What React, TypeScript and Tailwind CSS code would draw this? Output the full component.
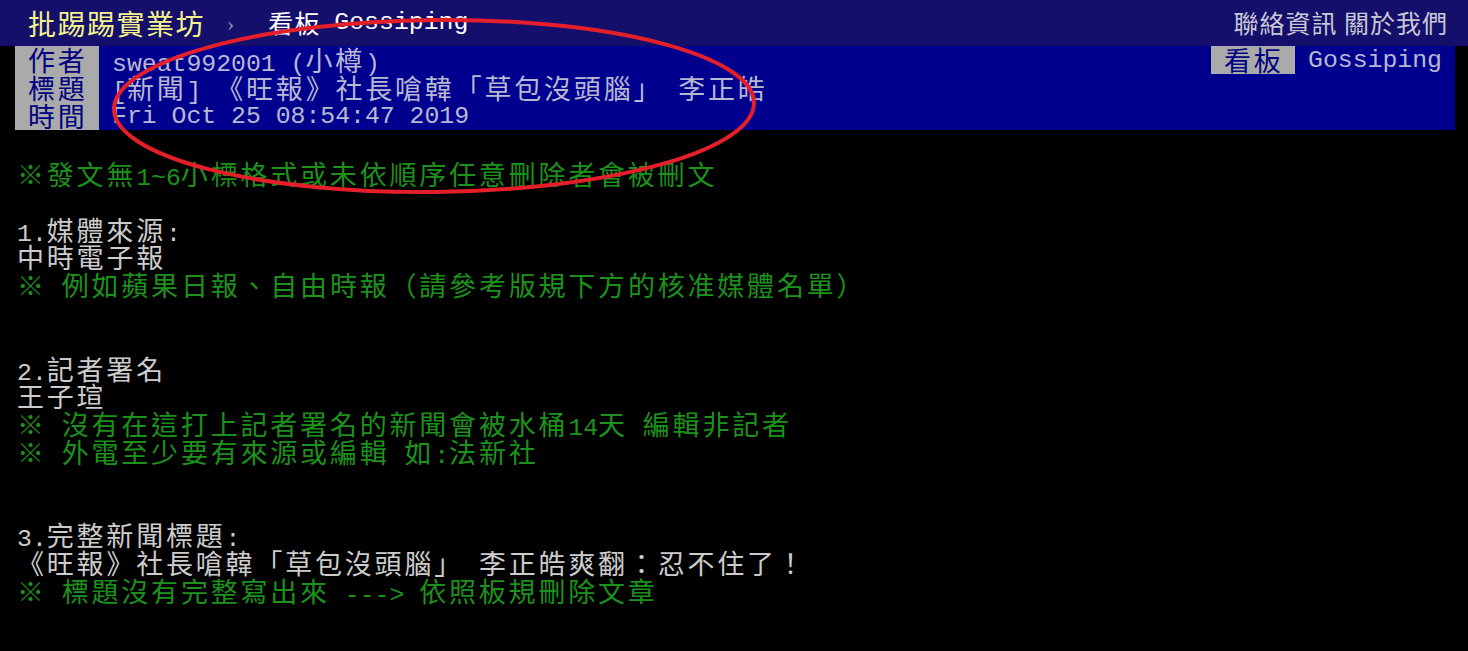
import React from 'react';

// ascii runs get the mono face, everything else the CJK face padded to a double-width cell
function Txt({ text }: { text: string }) {
    const parts = text.match(/[\x00-\x7F]+|[^\x00-\x7F]+/g) || [];
    return (
        <>
            {parts.map((p, i) =>
                /^[\x00-\x7F]+$/.test(p) ? (
                    <span key={i} className="font-['Liberation_Mono',monospace] text-[24.8px]">
                        {p}
                    </span>
                ) : (
                    <span key={i} className="font-['Noto_Sans_CJK_TC',sans-serif] text-[27px] tracking-[2.8px]">
                        {p}
                    </span>
                )
            )}
        </>
    );
}

type Line = { text: string; green?: boolean };

const lines: Line[] = [
    { text: '※發文無1~6小標格式或未依順序任意刪除者會被刪文', green: true },
    { text: '' },
    { text: '1.媒體來源:' },
    { text: '中時電子報' },
    { text: '※ 例如蘋果日報、自由時報（請參考版規下方的核准媒體名單）', green: true },
    { text: '' },
    { text: '' },
    { text: '2.記者署名' },
    { text: '王子瑄' },
    { text: '※ 沒有在這打上記者署名的新聞會被水桶14天 編輯非記者', green: true },
    { text: '※ 外電至少要有來源或編輯 如:法新社', green: true },
    { text: '' },
    { text: '' },
    { text: '3.完整新聞標題:' },
    { text: '《旺報》社長嗆韓「草包沒頭腦」 李正皓爽翻：忍不住了！' },
    { text: '※ 標題沒有完整寫出來 ---> 依照板規刪除文章', green: true },
];

function MetaLabel({ label }: { label: string }) {
    return (
        <div className="w-[84px] h-[28px] bg-[#aaaaaa] text-[#000080] pl-[13px] leading-[28px] whitespace-pre shrink-0">
            <Txt text={label} />
        </div>
    );
}

function MetaRow({ label, value }: { label: string; value: string }) {
    return (
        <div className="flex h-[28px] leading-[28px]">
            <MetaLabel label={label} />
            <div className="ml-[13px] text-[#b8b8d2] whitespace-pre">
                <Txt text={value} />
            </div>
        </div>
    );
}

export default function App() {
    return (
        <div className="relative w-[1468px] h-[651px] bg-black overflow-hidden">
            <div className="h-[46px] bg-[#140f6b] flex items-center justify-between pl-[28px] pr-[20px]">
                <div className="flex items-center">
                    <span className="font-['Noto_Sans_CJK_TC',sans-serif] text-[28px] tracking-[1.5px] text-[#f4f48a]">
                        批踢踢實業坊
                    </span>
                    <span className="ml-[22px] mr-[34px] font-['Liberation_Serif',serif] text-[22px] text-[#8f8fc0]">›</span>
                    <span className="font-['Noto_Sans_CJK_TC',sans-serif] text-[25px] text-white tracking-[1px]">看板</span>
                    <span className="ml-[14px] font-['Liberation_Mono',monospace] text-[24.8px] text-white">Gossiping</span>
                </div>
                <div className="font-['Noto_Sans_CJK_TC',sans-serif] text-[25px] tracking-[1px] text-[#c8c8d4] whitespace-pre">
                    聯絡資訊 關於我們
                </div>
            </div>

            <div className="ml-[15px] w-[1440px] bg-[#00008f]">
                <div className="flex justify-between">
                    <MetaRow label="作者" value="sweat992001 (小樽)" />
                    <div className="flex h-[28px] leading-[28px] pr-[13px]">
                        <MetaLabel label="看板" />
                        <div className="ml-[13px] text-[#b8b8d2]">
                            <Txt text="Gossiping" />
                        </div>
                    </div>
                </div>
                <MetaRow label="標題" value="[新聞] 《旺報》社長嗆韓「草包沒頭腦」 李正皓" />
                <MetaRow label="時間" value="Fri Oct 25 08:54:47 2019" />
            </div>

            <div className="pt-[30px] px-[17px]">
                {lines.map((l, i) => (
                    <div
                        key={i}
                        className={
                            l.green
                                ? 'h-[27.8px] leading-[27.8px] whitespace-pre text-[#1c921c]'
                                : 'h-[27.8px] leading-[27.8px] whitespace-pre text-[#cccccc]'
                        }
                    >
                        <Txt text={l.text} />
                    </div>
                ))}
            </div>

            <svg className="absolute inset-0 pointer-events-none" width="1468" height="651">
                <ellipse
                    cx="434"
                    cy="106"
                    rx="320"
                    ry="86"
                    fill="none"
                    stroke="#e41f2a"
                    strokeWidth="4"
                    transform="rotate(-0.6 434 106)"
                />
            </svg>
        </div>
    );
}
